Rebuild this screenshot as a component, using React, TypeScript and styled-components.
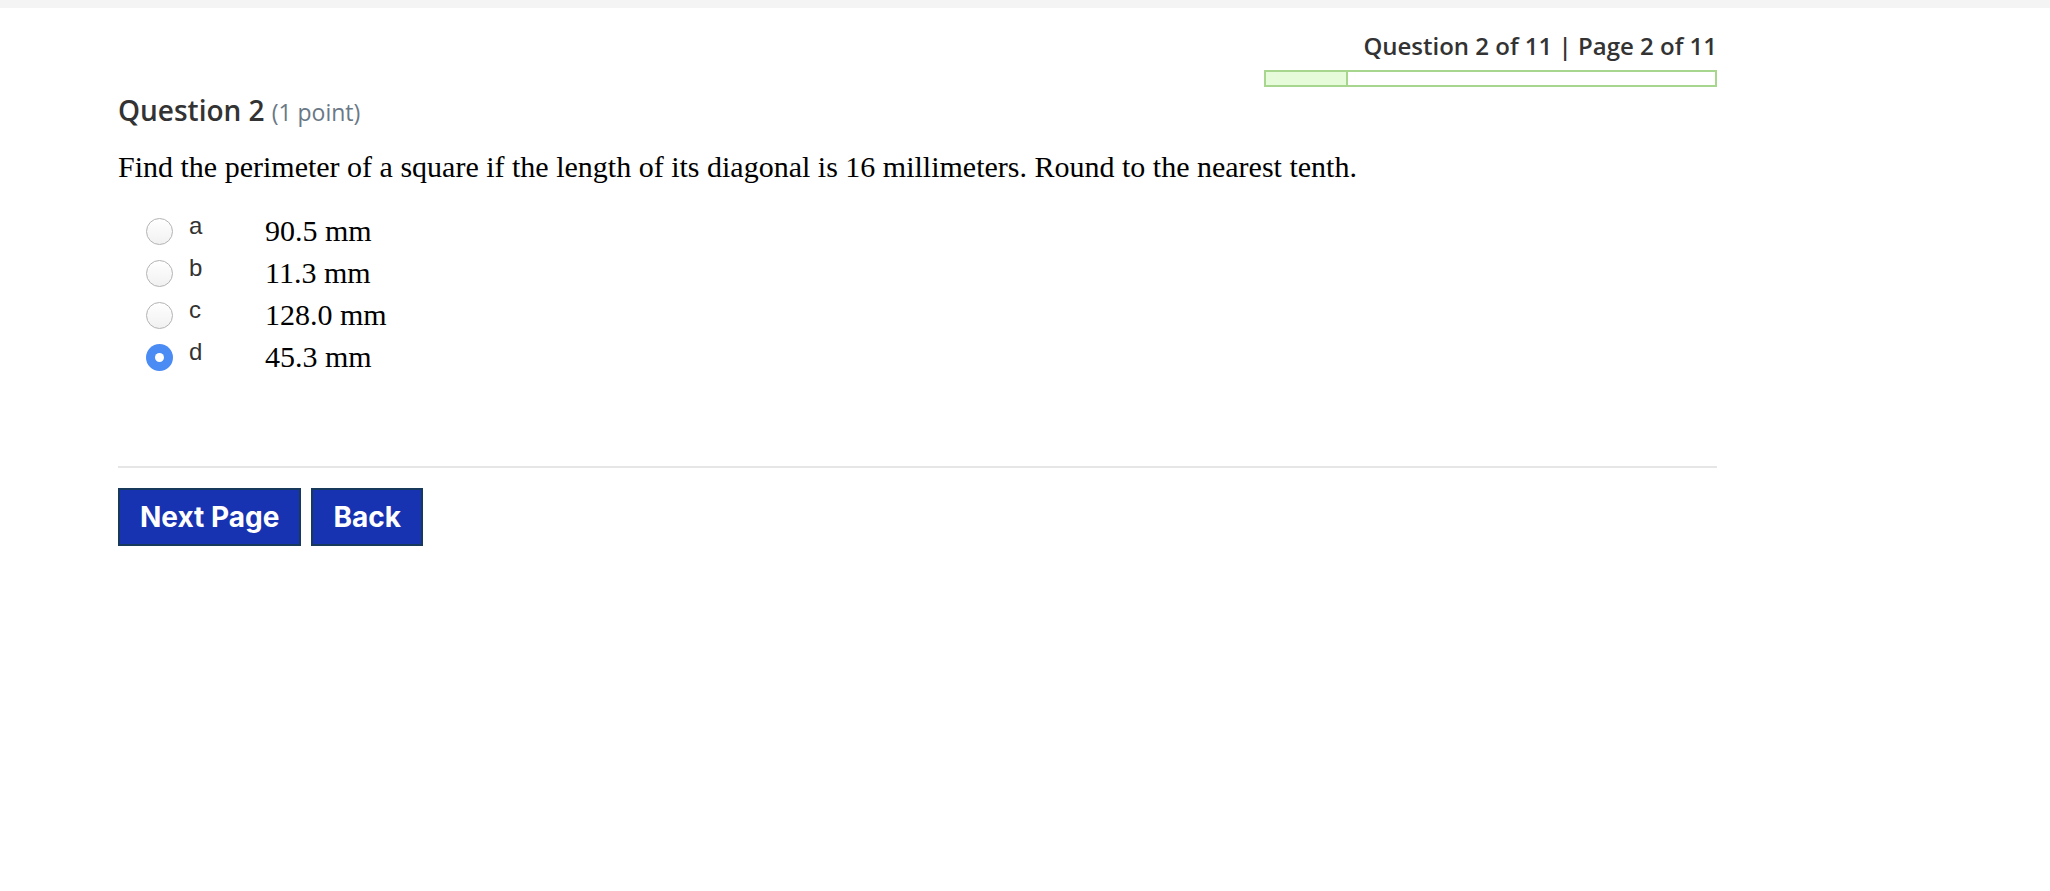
import React from "react";
import styled, { createGlobalStyle } from "styled-components";

const Global = createGlobalStyle`
  html, body { margin: 0; padding: 0; background: #ffffff; }
  body { font-family: "Open Sans", "Liberation Sans", sans-serif; }
`;

const TopStrip = styled.div`
  height: 8px;
  background: #f4f4f4;
`;

const Page = styled.main`
  width: 1599px;
  padding: 0 0 0 118px;
  display: flex;
  flex-direction: column;
`;

const Status = styled.div`
  display: flex;
  flex-direction: column;
  align-items: flex-end;
  padding-top: 25px;
  gap: 11px;
`;

const StatusText = styled.div`
  font-family: "Open Sans", sans-serif;
  font-weight: 600;
  font-size: 24px;
  line-height: 26px;
  color: #333333;
`;

const Progress = styled.div`
  width: 453px;
  height: 17px;
  box-sizing: border-box;
  border: 2px solid #a7d68e;
  background: #ffffff;
  display: flex;
`;

const ProgressFill = styled.div`
  height: 100%;
  background: #e6fbd9;
  border-right: 2px solid #a7d68e;
  box-sizing: border-box;
`;

const Title = styled.h2`
  margin: 5px 0 0;
  font-family: "Open Sans", sans-serif;
  font-weight: 600;
  font-size: 28px;
  line-height: 36px;
  color: #333333;
  display: flex;
  align-items: baseline;
  gap: 7px;
`;

const Points = styled.span`
  font-weight: 400;
  font-size: 23px;
  color: #6a7886;
`;

const Prompt = styled.p`
  margin: 19px 0 0;
  font-family: "Liberation Serif", "Times New Roman", serif;
  font-size: 30px;
  line-height: 36px;
  color: #000000;
`;

const Options = styled.div`
  margin: 25px 0 0 28px;
  display: flex;
  flex-direction: column;
`;

const Option = styled.label`
  display: grid;
  grid-template-columns: 27px 60px auto;
  column-gap: 16px;
  align-items: center;
  height: 42px;
`;

const Radio = styled.span<{ $checked?: boolean }>`
  width: 27px;
  height: 27px;
  box-sizing: border-box;
  border-radius: 50%;
  border: ${(p) => (p.$checked ? "none" : "1px solid #b3b3b3")};
  background: ${(p) =>
    p.$checked ? "#4b8bf4" : "linear-gradient(#ffffff, #f1f1f1)"};
  display: flex;
  align-items: center;
  justify-content: center;
  &::after {
    content: "";
    display: ${(p) => (p.$checked ? "block" : "none")};
    width: 9px;
    height: 9px;
    border-radius: 50%;
    background: #ffffff;
  }
`;

const Letter = styled.span`
  font-family: "Liberation Sans", Arial, sans-serif;
  font-size: 24px;
  color: #333333;
  position: relative;
  top: -5px;
`;

const Answer = styled.span`
  font-family: "Liberation Serif", "Times New Roman", serif;
  font-size: 30px;
  color: #000000;
`;

const Divider = styled.hr`
  margin: 88px 0 0;
  border: none;
  height: 2px;
  background: #e6e6e6;
`;

const Buttons = styled.div`
  margin-top: 20px;
  display: flex;
  gap: 10px;
`;

const Button = styled.button`
  height: 58px;
  padding: 0 20px;
  background: #1833b1;
  border: 2px solid #173a5c;
  box-shadow: 0 2px 0 #e3e3e3;
  color: #ffffff;
  font-family: Inter, "Liberation Sans", sans-serif;
  font-weight: 700;
  font-size: 28px;
  cursor: pointer;
`;

const options = [
  { letter: "a", text: "90.5 mm" },
  { letter: "b", text: "11.3 mm" },
  { letter: "c", text: "128.0 mm" },
  { letter: "d", text: "45.3 mm", checked: true },
];

export default function App() {
  return (
    <>
      <Global />
      <TopStrip />
      <Page>
        <Status>
          <StatusText>Question 2 of 11 | Page 2 of 11</StatusText>
          <Progress>
            <ProgressFill style={{ width: `${(2 / 11) * 100}%` }} />
          </Progress>
        </Status>
        <Title>
          Question 2<Points>(1 point)</Points>
        </Title>
        <Prompt>
          Find the perimeter of a square if the length of its diagonal is 16
          millimeters. Round to the nearest tenth.
        </Prompt>
        <Options>
          {options.map((o) => (
            <Option key={o.letter}>
              <Radio $checked={o.checked} />
              <Letter>{o.letter}</Letter>
              <Answer>{o.text}</Answer>
            </Option>
          ))}
        </Options>
        <Divider />
        <Buttons>
          <Button>Next Page</Button>
          <Button>Back</Button>
        </Buttons>
      </Page>
    </>
  );
}
